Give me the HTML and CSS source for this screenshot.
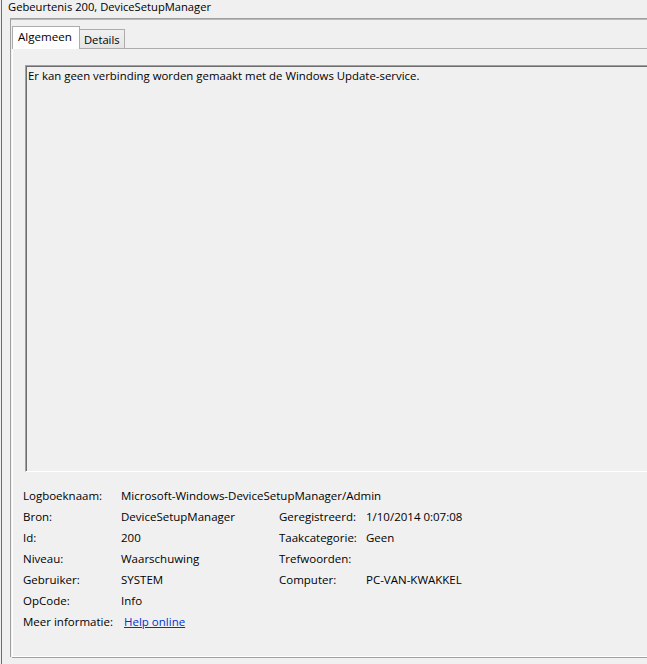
FILE: index.html
```html
<!DOCTYPE html>
<html>
<head>
<meta charset="utf-8">
<link rel="stylesheet" href="styles.css">
</head>
<body>
<div class="window">
  <div class="title">Gebeurtenis 200, DeviceSetupManager</div>
  <div class="frame">
    <div class="tabs">
      <div class="tab active">Algemeen</div>
      <div class="tab">Details</div>
    </div>
    <div class="page">
      <div class="textbox">Er kan geen verbinding worden gemaakt met de Windows Update-service.</div>
      <div class="props">
        <div class="lbl">Logboeknaam:</div><div class="val wide">Microsoft-Windows-DeviceSetupManager/Admin</div>
        <div class="lbl">Bron:</div><div class="val">DeviceSetupManager</div><div class="lbl">Geregistreerd:</div><div class="val">1/10/2014 0:07:08</div>
        <div class="lbl">Id:</div><div class="val">200</div><div class="lbl">Taakcategorie:</div><div class="val">Geen</div>
        <div class="lbl">Niveau:</div><div class="val">Waarschuwing</div><div class="lbl">Trefwoorden:</div><div class="val"></div>
        <div class="lbl">Gebruiker:</div><div class="val">SYSTEM</div><div class="lbl">Computer:</div><div class="val">PC-VAN-KWAKKEL</div>
        <div class="lbl">OpCode:</div><div class="val wide">Info</div>
        <div class="lbl">Meer informatie:</div><div class="val wide"><a class="link" href="#">Help online</a></div>
      </div>
    </div>
  </div>
</div>
</body>
</html>
```
FILE: styles.css
```css
html, body {
  margin: 0;
  padding: 0;
  background: #f0f0f0;
  overflow: hidden;
}
body {
  font-family: "Open Sans", "Noto Sans", "DejaVu Sans", sans-serif;
  font-size: 11.5px;
  color: #000;
}
.window {
  width: 647px;
  height: 664px;
  box-sizing: border-box;
  margin-left: 1px;
  border-left: 1px solid #6b6b6b;
  overflow: hidden;
}
.title {
  height: 18px;
  padding-left: 6px;
  line-height: 13px;
  font-size: 11.2px;
  white-space: nowrap;
}
.frame {
  margin-left: 8px;
  border-top: 1px solid #a0a0a0;
  border-left: 1px solid #a0a0a0;
  box-shadow: inset 0 1px 0 #b9b9b9;
  padding-left: 1px;
  padding-top: 7px;
  height: 639px;
  box-sizing: border-box;
}
.tabs {
  display: flex;
  align-items: flex-end;
  height: 22px;
  position: relative;
  z-index: 1;
}
.tab {
  box-sizing: border-box;
  border: 1px solid #acacac;
  border-bottom: none;
  height: 19px;
  width: 46px;
  padding: 0 0 0 4px;
  line-height: 19px;
  background: linear-gradient(#f0f0f0, #e5e5e5);
  margin-left: -1px;
  font-size: 11.2px;
}
.tab.active {
  margin-left: 0;
  width: 68px;
  height: 23px;
  margin-bottom: -1px;
  background: #fff;
  padding: 0 0 0 5px;
  line-height: 20px;
  font-size: 11.6px;
}
.page {
  border-top: 1px solid #acacac;
  border-left: 1px solid #fff;
  border-bottom: 1px solid #fff;
  box-shadow: 0 1px 0 #a0a0a0;
  height: 609px;
  box-sizing: border-box;
  padding: 16px 0 0 12px;
}
.textbox {
  height: 407px;
  box-sizing: border-box;
  border-top: 1px solid #a0a0a0;
  border-left: 1px solid #a0a0a0;
  border-bottom: 1px solid #fff;
  box-shadow: inset 1px 1px 0 #6e6e6e;
  padding: 2px 0 0 2px;
  line-height: 15px;
  font-size: 11.4px;
  white-space: nowrap;
  margin-right: -20px;
}
.props {
  display: grid;
  grid-template-columns: 98px 158px 87px 1fr;
  grid-auto-rows: 21px;
  margin-top: 13px;
  margin-left: -2px;
  line-height: 21px;
}
.val.wide {
  grid-column: 2 / 5;
}
.link {
  color: #0033cc;
  text-decoration: underline;
  margin-left: 3px;
}
```
